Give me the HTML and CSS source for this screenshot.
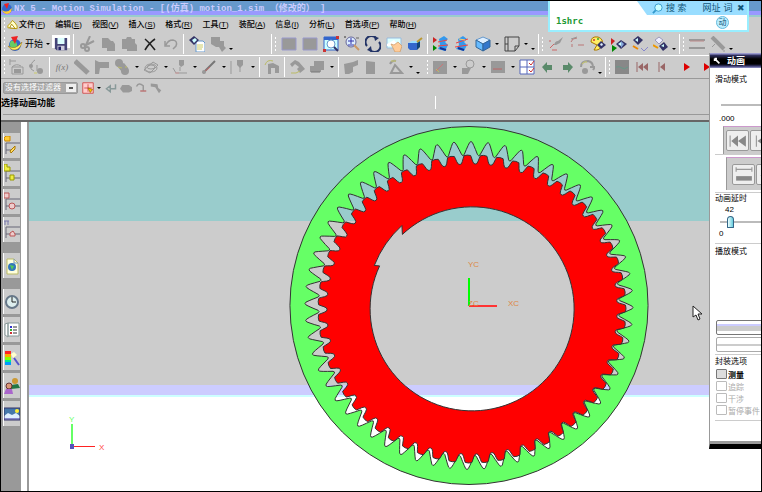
FILE: index.html
```
<!DOCTYPE html>
<html lang="zh-CN">
<head>
  <meta charset="UTF-8">
  <meta name="viewport" content="width=device-width, initial-scale=1.0">
  <title>NX 5 - Motion Simulation</title>
  <link rel="stylesheet" href="styles.css">
</head>
<body>
<div class="app">

  <header class="titlebar">
    <svg class="logo" viewBox="0 0 12 12"><circle cx="6" cy="6" r="5" fill="#36c"/><path d="M1 7q5 4 10-2l-1 4q-4 4-8 0z" fill="#fc3"/><path d="M3 1l5-1-2 6z" fill="#e22"/></svg>
    <h1>NX 5 - Motion Simulation - [(仿真) motion_1.sim （修改的） ]</h1>
  </header>

  <!-- Menu -->
  <nav class="menubar">
    <i class="grip"></i>
    <svg class="menu-icon" viewBox="0 0 12 12"><path d="M1 9q-1-3 2-4l3-4 3 3q3 3 2 6z" fill="#ffc" stroke="#b90"/><path d="M3 9l2-4 4 5z" fill="#fff" stroke="#a80"/></svg>
    <button>文件(<u>F</u>)</button>
    <button>编辑(<u>E</u>)</button>
    <button>视图(<u>V</u>)</button>
    <button>插入(<u>S</u>)</button>
    <button>格式(<u>R</u>)</button>
    <button>工具(<u>T</u>)</button>
    <button>装配(<u>A</u>)</button>
    <button>信息(<u>I</u>)</button>
    <button>分析(<u>L</u>)</button>
    <button>首选项(<u>P</u>)</button>
    <button>帮助(<u>H</u>)</button>
  </nav>

  <!-- Standard and view tools -->
  <div class="toolbar toolbar-main">
    <i class="grip"></i>
    <button class="start"><svg viewBox="0 0 16 16"><circle cx="8" cy="9" r="6" fill="#36c"/><path d="M4 5q5-1 6 3t-5 5q-4-4-1-8z" fill="#6c6"/><path d="M1 10q7 5 14-4-1 5-4 7-6 3-10-3z" fill="#fe6" stroke="#960" stroke-width=".5"/><path d="M4 1l7-1-3 8z" fill="#e22"/></svg>开始<i class="arrow"></i></button>
    <button class="tool active" aria-label="保存"><svg viewBox="0 0 16 16"><path d="M1 1h14v14H3l-2-2z" fill="#447"/><path d="M4 1h8v7H4z" fill="#dff"/><path d="M4 10h8v5H4z" fill="#ccd"/><path d="M5 11h3v4H5z" fill="#226"/></svg></button>
    <i class="sep"></i>
    <button class="tool" aria-label="剪切"><svg viewBox="0 0 16 16"><path d="M11 0L7 9M15 5L5 10" class="off-line thick"/><circle cx="4" cy="10" r="2" class="off-line thick"/><circle cx="8" cy="13" r="2" class="off-line thick"/></svg></button>
    <button class="tool" aria-label="复制"><svg viewBox="0 0 16 16" class="off"><path d="M2 2h6l3 3h2l2 3v7H7v-3H2z"/></svg></button>
    <button class="tool" aria-label="粘贴"><svg viewBox="0 0 16 16" class="off"><path d="M1 3h4l1-2h4l1 2h3v4l2 2v6H6v-2H1z"/></svg></button>
    <button class="tool" aria-label="删除"><svg viewBox="0 0 16 16"><path d="M3 3q5 4 10 11M13 3Q7 7 3 14" stroke="#222" stroke-width="1.6" fill="none"/></svg></button>
    <button class="tool" aria-label="撤消"><svg viewBox="0 0 16 16"><path d="M3 9q2-5 7-5 5 1 3 6l-3 3M2 5v5h5" stroke="#999" stroke-width="1.5" fill="none"/></svg></button>
    <i class="sep"></i>
    <button class="tool" aria-label="属性"><svg viewBox="0 0 16 16"><path d="M7 5h7l2 2v9H7z" fill="#fff" stroke="#69c"/><path d="M8 9h6M8 11h6M8 13h5" stroke="#cc6"/><path d="M0 4l5-4 5 4-5 5z" fill="#336"/><path d="M3 4l3-2 2 2-3 3z" fill="#cff"/></svg></button>
    <button class="tool" aria-label="分析工具"><svg viewBox="0 0 16 16" class="off"><path d="M1 1h9v4h4v5l2 2-4 4-3-5H6L1 8z"/></svg></button>
    <i class="more"></i>
    <i class="gap"></i>
    <i class="sep"></i>
    <i class="grip"></i>
    <button class="tool" aria-label="刷新"><svg viewBox="0 0 16 16" class="off"><path d="M1 2h14v12H1z" stroke="#99c"/></svg></button>
    <button class="tool" aria-label="缩放区域"><svg viewBox="0 0 16 16" class="off"><path d="M1 2h14v12H1z" stroke="#99c"/></svg></button>
    <button class="tool" aria-label="适合窗口"><svg viewBox="0 0 16 16"><path d="M1 1h14v13H1z" fill="#cff" stroke="#36c"/><path d="M1 1h14v3H1z" fill="#36c"/><circle cx="8" cy="8" r="4" fill="#fff" stroke="#69c"/><path d="M11 11l4 4" stroke="#336" stroke-width="2"/><path d="M0 13h3v3H0zM13 0h3v3h-3z" fill="#c33"/></svg></button>
    <button class="tool" aria-label="缩放"><svg viewBox="0 0 16 16"><circle cx="7" cy="6" r="5" fill="#def" stroke="#669"/><path d="M4 5h6M7 2v6M4 9h6" stroke="#33a"/><path d="M10 9l5 5" stroke="#c96" stroke-width="2"/><path d="M0 1h2M1 0v2M12 2h3" stroke="#666"/></svg></button>
    <button class="tool" aria-label="旋转"><svg viewBox="0 0 16 16"><path d="M2 10A6 6 0 0 1 11 2M14 6a6 6 0 0 1-9 8" stroke="#236" stroke-width="2" fill="none"/><path d="M9 0l5 2-4 3zM7 16l-5-2 4-4z" fill="#236"/></svg></button>
    <button class="tool" aria-label="平移"><svg viewBox="0 0 16 16"><path d="M1 2h14v10H1z" fill="#dff" stroke="#9bd"/><path d="M1 8l7-4 5 6H1z" fill="#fff"/><path d="M5 8l3 1 4-3 4 4-2 6H9z" fill="#fc9" stroke="#c96" stroke-width=".7"/></svg></button>
    <button class="tool" aria-label="着色"><svg viewBox="0 0 16 16"><path d="M1 7l4-2h9l-2 3z" fill="#9df"/><path d="M1 7h9v7H3l-2-2z" fill="#36c"/><path d="M10 7l3-2v6l-3 3z" fill="#147"/><path d="M10 6l5-4" stroke="#b93" stroke-width="2"/></svg></button>
    <i class="sep"></i>
    <button class="tool" aria-label="替换视图"><svg viewBox="0 0 16 16"><path d="M0 1l4 3-4 3z" fill="#c22"/><path d="M0 9l4 3-4 3z" fill="#080"/><path d="M6 3l5-3 4 3-3 3 3 3-3 6-7-2 2-4z" fill="#39e"/><path d="M5 6l9-2M5 10l10-1" stroke="#e44"/><path d="M7 12l6 2" stroke="#139" stroke-width="2"/></svg></button>
    <button class="tool" aria-label="对齐视图"><svg viewBox="0 0 16 16"><path d="M4 3l5-3 4 3-3 3 3 3-3 6-8-2 3-4z" fill="#39e"/><path d="M2 7l12-4M1 11l13-2" stroke="#e44"/><path d="M4 12l6 2" stroke="#139" stroke-width="2"/><path d="M5 3l6 1" stroke="#fc6"/></svg></button>
    <button class="tool" aria-label="正等测视图"><svg viewBox="0 0 16 16"><path d="M1 4l7-3 7 3-7 4z" fill="#def" stroke="#69c"/><path d="M1 4l7 4v7l-7-4z" fill="#6bf" stroke="#369"/><path d="M15 4L8 8v7l7-4z" fill="#37c" stroke="#369"/></svg></button>
    <i class="arrow"></i>
    <button class="tool" aria-label="背景"><svg viewBox="0 0 16 16"><path d="M1 1h14v9l-4 5H1z" fill="#ccc" stroke="#444"/><path d="M4 1v14M1 8h3M15 10h-4v5" fill="none" stroke="#444"/></svg></button>
    <i class="arrow"></i>
    <i class="more"></i>
    <i class="sep"></i>
    <i class="grip"></i>
    <button class="tool" aria-label="连杆"><svg viewBox="0 0 16 16"><path d="M1 5h2M2 12l4-4M4 14h5" stroke="#c66"/><path d="M6 9q1-4 4-4l5-4-3 6-4 2z" fill="#999"/></svg></button>
    <button class="tool" aria-label="运动副"><svg viewBox="0 0 16 16"><path d="M2 6q1-4 6-4M9 9h6M3 8v3" stroke="#b77" fill="none"/><path d="M2 3l6-2" stroke="#999"/></svg></button>
    <button class="tool" aria-label="外观"><svg viewBox="0 0 16 16"><path d="M1 6q0-6 7-5 6 2 4 8-2 6-8 5l3-5z" fill="#fe6" stroke="#a70"/><circle cx="4" cy="4" r="1" fill="#c33"/><circle cx="8" cy="3" r="1" fill="#3a3"/><path d="M7 9l4-4 5 4-5 4z" fill="#336"/><path d="M10 8l2-1 1 2-2 1z" fill="#def"/></svg></button>
    <button class="tool" aria-label="显示"><svg viewBox="0 0 16 16"><path d="M0 2l4 3-4 4z" fill="#c22"/><path d="M1 9l5 3-5 4z" fill="#080"/><path d="M5 8l5-4 6 4-6 5z" fill="#336"/><path d="M7 8l3-2v4z" fill="#cff"/><path d="M10 5l3 3-3 4z" fill="#8ad"/></svg></button>
    <button class="tool" aria-label="隐藏"><svg viewBox="0 0 16 16"><path d="M1 4l5-4 5 4-5 5z" fill="#336"/><path d="M3 4l3-2v4z" fill="#cff"/><path d="M1 10l5 3" stroke="#e80" stroke-width="2"/><path d="M9 12l3 3 4-4" fill="none" stroke="#88c"/></svg></button>
    <button class="tool" aria-label="全部显示"><svg viewBox="0 0 16 16"><path d="M2 4l4-3 4 3-4 4z" fill="#eef" stroke="#99b"/><path d="M6 10l5-4 4 5-5 4z" fill="#336"/><path d="M8 10l3-2v3z" fill="#cff"/><path d="M0 9l5 3" stroke="#e90" stroke-width="2"/></svg></button>
    <i class="more"></i>
    <i class="sep"></i>
    <i class="grip"></i>
    <button class="tool" aria-label="尺寸"><svg viewBox="0 0 16 16"><path d="M0 4h16M0 12h16" stroke="#999" stroke-width="2"/><path d="M1 5h14" stroke="#b88"/></svg></button>
    <button class="tool" aria-label="注释"><svg viewBox="0 0 16 16"><path d="M2 1l12 12" stroke="#999" stroke-width="4"/><path d="M2 11l3-3M13 15h2" stroke="#999"/></svg></button>
    <i class="more"></i>
  </div>

  <!-- Motion tools -->
  <div class="toolbar toolbar-motion">
    <i class="grip"></i>
    <button class="tool" aria-label="环境"><svg viewBox="0 0 16 16"><path d="M1 0v6M1 2h6M3 8q4-4 9-1M3 8h11v7H3z" class="off-line"/><path d="M5 10h7v4H5z" fill="#999"/></svg></button>
    <button class="tool" aria-label="仿真"><svg viewBox="0 0 16 16"><path d="M6 1Q1 4 2 10l3 2M8 6v6" class="off-line"/><circle cx="11" cy="12" r="3" fill="#999"/><circle cx="2" cy="7" r="2" fill="#999"/><path d="M5 14h3" stroke="#cc6"/></svg></button>
    <i class="sep"></i>
    <button class="tool fx">f(x)</button>
    <button class="tool" aria-label="连杆"><svg viewBox="0 0 16 16"><path d="M1 2l13 12" stroke="#999" stroke-width="5"/></svg></button>
    <button class="tool" aria-label="运动副"><svg viewBox="0 0 16 16" class="off"><path d="M1 1l4 2h10v6H6l-1 6H1z"/></svg></button>
    <button class="tool" aria-label="齿轮"><svg viewBox="0 0 16 16" class="off"><circle cx="5" cy="4" r="4"/><circle cx="11" cy="12" r="4"/><path d="M3 7l7-3 4 5-6 4z"/><path d="M4 8l4 1M12 7v2" stroke="#bb6"/></svg></button>
    <i class="arrow"></i>
    <button class="tool" aria-label="弹簧"><svg viewBox="0 0 16 16"><path d="M1 11l9-8 5 3-8 8z" class="off-line"/><ellipse cx="8" cy="8" rx="4" ry="2" class="off-line"/><ellipse cx="8" cy="9" rx="6" ry="4" class="off-line"/></svg></button>
    <i class="arrow"></i>
    <button class="tool" aria-label="接触"><svg viewBox="0 0 16 16"><path d="M8 8v4M1 9l3 5h11" class="off-line"/><path d="M7 1h5v5l-3 2-2-2z" fill="#999"/><path d="M3 14h4" stroke="#c99"/></svg></button>
    <i class="arrow"></i>
    <button class="tool" aria-label="标量力"><svg viewBox="0 0 16 16"><path d="M2 14L14 2" stroke="#777" stroke-width="2"/><path d="M2 14l7-6" stroke="#c66"/><circle cx="3" cy="13" r="2" fill="#999"/></svg></button>
    <i class="arrow"></i>
    <button class="tool" aria-label="标记"><svg viewBox="0 0 16 16"><path d="M1 2v13M10 8v5" class="off-line"/><path d="M7 1h6v5l-3 3-3-3z" fill="#999"/></svg></button>
    <i class="arrow"></i>
    <i class="sep"></i>
    <button class="tool" aria-label="驱动"><svg viewBox="0 0 16 16"><path d="M1 6q2-6 8-4" stroke="#bb6" fill="none"/><path d="M4 5l5-1 6 3v7h-4v-5H7v6H4z" fill="#999"/></svg></button>
    <i class="sep"></i>
    <button class="tool" aria-label="函数"><svg viewBox="0 0 16 16" class="off"><path d="M1 5l5-4 4 2 6 7-5 4-3-4 2-2-4-3-3 3z"/><path d="M2 14h5l4-2" stroke="#bb6" fill="none"/></svg></button>
    <button class="tool" aria-label="干涉"><svg viewBox="0 0 16 16" class="off"><path d="M5 2h10v9h-3v2H1V7h4z"/><path d="M2 13h9" stroke="#777"/></svg></button>
    <i class="arrow"></i>
    <i class="sep"></i>
    <button class="tool" aria-label="测量"><svg viewBox="0 0 16 16" class="off"><path d="M1 5l9-2 5-2v5l-5 2v5l-4 2H2z"/></svg></button>
    <button class="tool" aria-label="追踪"><svg viewBox="0 0 16 16" class="off"><path d="M3 2l9 1v12H3z"/></svg></button>
    <i class="gap-small"></i>
    <button class="tool" aria-label="载荷"><svg viewBox="0 0 16 16"><path d="M2 5q2-4 6-3M3 14l4-8 7 8z" stroke="#999" stroke-width="2" fill="none"/><path d="M3 2h5" stroke="#cc6"/></svg></button>
    <i class="arrow"></i>
    <i class="more"></i>
    <i class="gap-small"></i>
    <i class="grip"></i>
    <button class="tool" aria-label="求解"><svg viewBox="0 0 16 16" class="off"><path d="M1 2h14v13H1z"/><path d="M4 12l7-7" stroke="#c77"/><path d="M4 10l3 3" stroke="#bb6"/></svg></button>
    <i class="arrow"></i>
    <button class="tool" aria-label="图表"><svg viewBox="0 0 16 16"><circle cx="9" cy="5" r="4" class="off-line"/><path d="M1 9h9l-3 6H1z" fill="#999"/></svg></button>
    <i class="arrow"></i>
    <button class="tool" aria-label="电子表格"><svg viewBox="0 0 16 16" class="off"><path d="M1 2h14v12H1z"/><path d="M3 10h9" stroke="#b66"/></svg></button>
    <i class="arrow"></i>
    <button class="tool" aria-label="检查"><svg viewBox="0 0 16 16"><path d="M1 1h14v14H1zM8 1v14M1 8h14" fill="#fff" stroke="#56b"/><path d="M10 4l2 2 3-4M10 11l2 2 3-4" stroke="#c33" fill="none"/></svg></button>
    <button class="tool" aria-label="后退"><svg viewBox="0 0 16 16"><path d="M3 8l5-5v3h5v5H8v3z" fill="#5a8a6a"/></svg></button>
    <button class="tool" aria-label="前进"><svg viewBox="0 0 16 16"><path d="M14 8L9 3v3H4v5h5v3z" fill="#5a8a6a"/></svg></button>
    <button class="tool" aria-label="重做"><svg viewBox="0 0 16 16"><path d="M2 8q0-6 7-6 5 1 5 6M11 8h5l-2 3" stroke="#999" stroke-width="2" fill="none"/><circle cx="6" cy="12" r="3" fill="#999"/><path d="M3 5q2-3 5-2" stroke="#cc6" fill="none"/></svg></button>
    <i class="more"></i>
    <i class="sep"></i>
    <i class="grip"></i>
    <button class="tool" aria-label="动画"><svg viewBox="0 0 16 16"><path d="M1 1h14v14H1z" fill="#888"/><path d="M2 8q4-1 6 1t6-1" stroke="#698" fill="none"/></svg></button>
    <button class="tool" aria-label="首帧"><svg viewBox="0 0 16 16"><path d="M3 3v10" stroke="#966"/><path d="M9 4v8L4 8zM14 4v8L9 8z" fill="#966"/></svg></button>
    <button class="tool" aria-label="上一帧"><svg viewBox="0 0 16 16"><path d="M5 3v10" stroke="#966"/><path d="M11 4v8L6 8z" fill="#966"/></svg></button>
    <i class="gap-small"></i>
    <button class="tool" aria-label="播放"><svg viewBox="0 0 16 16"><path d="M5 4v8l6-4z" fill="#d00"/></svg></button>
    <button class="tool" aria-label="下一帧"><svg viewBox="0 0 16 16"><path d="M5 4v8l6-4z" fill="#d00"/></svg></button>
  </div>

  <!-- Selection bar -->
  <div class="selection-bar">
    <select aria-label="选择过滤器" disabled><option>没有选择过滤器</option></select>
    <button class="tool" aria-label="捕捉"><svg viewBox="0 0 16 16"><path d="M1 1h14v14H1z" fill="#fcc" stroke="#c33"/><path d="M8 3v10M3 8h10" stroke="#c33"/><path d="M8 8l6 2-3 4z" fill="#fc0" stroke="#960"/></svg></button>
    <i class="arrow"></i>
    <button class="tool" aria-label="返回"><svg viewBox="0 0 16 16"><path d="M14 3v6H8M7 5L2 9l5 4z" fill="none" stroke="#899" stroke-width="2"/></svg></button>
    <button class="tool" aria-label="高亮"><svg viewBox="0 0 16 16" class="off"><path d="M0 9l3-5h9l4 3v5l-4 2H4z"/></svg></button>
    <button class="tool" aria-label="全选"><svg viewBox="0 0 16 16"><path d="M2 6q3-6 9-1v7" stroke="#999" stroke-width="2" fill="none"/><path d="M7 12h8" stroke="#b77" stroke-width="2"/></svg></button>
    <button class="tool" aria-label="反选"><svg viewBox="0 0 16 16" class="off"><path d="M1 2l9 1 1 5 4 3-3 4-5-8-6-1z"/></svg></button>
  </div>

  <div class="prompt">
    <p>选择动画功能</p>
    <i class="prompt-split"></i>
  </div>

  <main>
    <!-- Resource bar -->
    <aside class="resources">
      <button aria-label="装配导航器"><svg viewBox="0 0 16 20"><path d="M2 7v11M2 7h14M2 14h5" class="tree"/><path d="M0 2l2-2h4v5H1z" fill="#fc3" stroke="#c80"/><path d="M6 15l5-5v3l-4 4z" fill="#fd6" stroke="#a70"/></svg></button>
      <button aria-label="部件导航器"><svg viewBox="0 0 16 20"><path d="M2 7v11M2 7h14M2 14h14" class="tree"/><path d="M0 0h3v3h3v4H0z" fill="#ee4" stroke="#990"/><path d="M6 11h4v5H6z" fill="#ee4" stroke="#990"/></svg></button>
      <button aria-label="约束导航器"><svg viewBox="0 0 16 20"><path d="M2 7v11M2 7h14M2 14h14" class="tree"/><path d="M0 1h5v5H0z" fill="#ecc" stroke="#b55"/><circle cx="8" cy="14" r="3" fill="#ecc" stroke="#b55"/></svg></button>
      <button aria-label="运动导航器"><svg viewBox="0 0 16 20"><path d="M2 7v11M2 7h14M2 14h14" class="tree"/><path d="M0 1h5M1 1v4M4 1v4" stroke="#77a"/><path d="M6 16v-3l3-2 2 3v2z" fill="#ecc" stroke="#b55"/></svg></button>
      <button class="spaced" aria-label="浏览器"><svg viewBox="0 0 16 20"><path d="M3 3h7l4 4v11H3z" fill="#ffd" stroke="#bb6"/><path d="M10 3v4h4" fill="none" stroke="#79b"/><circle cx="8" cy="11" r="4" fill="#37b"/><path d="M6 9l4 1-2 4z" fill="#5c5"/></svg></button>
      <button class="spaced" aria-label="历史"><svg viewBox="0 0 16 20"><circle cx="8" cy="10" r="6" fill="#dee" stroke="#678" stroke-width="2"/><path d="M8 5v5h4" fill="none" stroke="#222"/></svg></button>
      <button aria-label="系统材料"><svg viewBox="0 0 16 20"><path d="M1 4l3-1v14l-3-2zM4 3h11v13H4z" fill="#fff" stroke="#899"/><path d="M6 6h2v2H6z" fill="#33c"/><path d="M6 9h2v2H6z" fill="#3a3"/><path d="M6 12h2v2H6z" fill="#c33"/><path d="M9 7h4M9 10h4M9 13h4" stroke="#333"/></svg></button>
      <button aria-label="可视化"><svg viewBox="0 0 16 20"><path d="M1 3h6v3H1z" fill="#f22"/><path d="M1 6h6v3H1z" fill="#fa0"/><path d="M1 9h6v3H1z" fill="#8f0"/><path d="M1 12h6v2H1z" fill="#0e8"/><path d="M1 14h6v3H1z" fill="#09f"/><path d="M7 6l3-2 3 3-4 3z" fill="#ffc"/><path d="M10 10l5 7" stroke="#55c" stroke-width="2"/></svg></button>
      <button aria-label="角色"><svg viewBox="0 0 16 20"><circle cx="11" cy="5" r="3" fill="#c93"/><path d="M7 13V9l7-1 2 4z" fill="#274"/><circle cx="5" cy="10" r="3" fill="#d97" stroke="#633"/><path d="M0 18l2-5h6l1 5z" fill="#a6c"/></svg></button>
      <button aria-label="场景"><svg viewBox="0 0 16 20"><path d="M0 4h16v12H0z" fill="#47a"/><path d="M0 12l4-3 4 2 4-2 4 3v2H0z" fill="#def"/><path d="M0 14h16v2H0z" fill="#88c"/><path d="M0 4h16v12H0z" fill="none" stroke="#336"/><circle cx="13" cy="7" r="2" fill="#fe3"/></svg></button>
    </aside>

    <!-- Graphics window -->
    <section class="viewport">
      <svg class="model">
        <path id="ring" class="ring" fill-rule="evenodd"/>
        <path id="pinion" class="pinion" fill-rule="evenodd"/>
        <g class="wcs">
          <path d="M440 184h28" stroke="#f33" stroke-width="2"/>
          <path d="M440 156v28" stroke="#0f0" stroke-width="2"/>
          <text x="439" y="145">YC</text>
          <text x="479" y="184">XC</text>
          <text x="439" y="184">ZC</text>
        </g>
        <g class="triad">
          <path d="M43 302v22" stroke="#6f6" stroke-width="2"/>
          <path d="M43 324.500h23" stroke="#f22"/>
          <path d="M41 322h4v5h-4z" fill="#55b"/>
          <text x="40" y="300" fill="#6f6">Y</text>
          <text x="70" y="328" fill="#f44">X</text>
        </g>
        <path class="pointer" d="M664 184v11l3-2 2 5 2-1-2-5h4z"/>
      </svg>
    </section>
  </main>

  <!-- Animation dialog -->
  <aside class="dialog">
    <h2><svg viewBox="0 0 10 10"><path d="M2 2l6 6M2 2v3M2 2h3" stroke="#fff" stroke-width="2"/></svg>动画</h2>
    <div class="dialog-body">
      <section class="group">
        <h3>滑动模式</h3>
        <i class="track"></i>
        <output>.000</output>
        <div class="button-row">
          <button aria-label="首帧"><svg viewBox="0 0 16 16"><path d="M1 3v10" class="off-line"/><path d="M8 3v10L2 8zM15 3v10L8 8z" fill="#888"/></svg></button>
          <button aria-label="上一帧"><svg viewBox="0 0 16 16"><path d="M3 3v10" class="off-line"/><path d="M11 3v10L4 8z" fill="#888"/></svg></button>
        </div>
      </section>
      <section class="group group-limits">
        <div class="button-row wide">
          <button aria-label="装配位置"><svg viewBox="0 0 16 16"><path d="M1 3h14M1 1v4M15 1v4" stroke="#999"/><path d="M1 9h14v4H1z" fill="#888"/></svg></button>
          <button aria-label="设计位置"><svg viewBox="0 0 16 16"><path d="M1 8h14l-6 4z" fill="#999"/></svg></button>
        </div>
      </section>
      <section class="group group-delay">
        <h3><label for="delay">动画延时</label></h3>
        <output for="delay">42</output>
        <input type="range" id="delay" min="0" max="1000" value="42">
        <span class="range-min">0</span>
      </section>
      <section class="group group-play">
        <h3>播放模式</h3>
        <button class="bar-button" aria-label="播放一次"></button>
        <button class="bar-button light" aria-label="循环播放"></button>
      </section>
      <section class="group group-package">
        <h3>封装选项</h3>
        <label class="check"><input type="checkbox">测量</label>
        <label class="check"><input type="checkbox" disabled>追踪</label>
        <label class="check"><input type="checkbox" disabled>干涉</label>
        <label class="check"><input type="checkbox" disabled>暂停事件</label>
      </section>
    </div>
  </aside>

  <!-- Floating input bar -->
  <div class="search">
    <div class="search-head">
      <svg viewBox="0 0 12 12"><path d="M1 11l4-4" stroke="#39c" stroke-width="2"/><circle cx="7" cy="5" r="4" fill="#cff" stroke="#39c"/></svg>
      <button>搜 索</button>
      <button>网址</button>
      <button>词</button>
      <button class="close">✖</button>
    </div>
    <div class="search-body">
      <input type="text" value="1shrc" aria-label="搜索">
      <button class="round">动</button>
    </div>
  </div>

</div>
<script src="gears.js"></script>
</body>
</html>
```

FILE: styles.css
```
* {
  margin: 0;
  padding: 0;
  box-sizing: border-box;
}

body {
  background: #000;
  font-family: "Liberation Sans", "Noto Sans CJK SC", sans-serif;
  font-size: 8px;
  color: #000;
}

button,
input,
select {
  font: inherit;
  color: inherit;
  background: none;
  border: none;
}

h1, h2, h3 {
  font-size: inherit;
  font-weight: normal;
}

i {
  display: block;
  flex: none;
}

svg {
  display: block;
  flex: none;
}

.app {
  position: relative;
  display: flex;
  flex-direction: column;
  height: 100vh;
  border: 1px solid #000;
  background: #ccc;
  overflow: hidden;
}

/* Title */
.titlebar {
  display: flex;
  align-items: center;
  gap: 1px;
  height: 16px;
  flex: none;
  background: linear-gradient(#69c 10px, #99f 10px, #99f 14px, #9cc 14px);
}

.logo {
  width: 12px;
  height: 12px;
}

.titlebar h1 {
  font-family: "Liberation Mono", "Noto Sans CJK SC", monospace;
  font-size: 9px;
  font-weight: bold;
  line-height: 14px;
  color: #ccf;
  white-space: pre;
}

/* Menu */
.menubar {
  display: flex;
  align-items: center;
  height: 15px;
  flex: none;
  padding-left: 2px;
}

.menu-icon {
  width: 11px;
  height: 12px;
  margin-right: -4px;
}

.menubar button {
  padding: 0 5px;
  font-weight: 500;
  line-height: 14px;
  white-space: nowrap;
}

/* Toolbars */
.toolbar {
  display: flex;
  align-items: center;
  height: 24px;
  flex: none;
  padding-left: 2px;
  overflow: hidden;
}

.toolbar-main {
  border-bottom: 1px solid #fff;
}

.toolbar-motion {
  height: 23px;
  border-bottom: 1px solid #999;
}

.tool {
  display: flex;
  align-items: center;
  justify-content: center;
  width: 21px;
  height: 20px;
  flex: none;
}

.tool.active {
  background: linear-gradient(#fff, #fff) no-repeat 2px 1px / 18px 13px;
}

.toolbar-motion .tool {
  width: 20px;
}

.tool svg,
.start svg {
  width: 16px;
  height: 16px;
}

.tool.active svg {
  width: 14px;
  height: 14px;
}

.off {
  fill: #999;
}

.off-line {
  fill: none;
  stroke: #999;
}

.thick {
  stroke-width: 2;
}

.fx {
  font: italic 9px "Liberation Serif", serif;
  color: #777;
}

.start {
  display: flex;
  align-items: center;
  gap: 2px;
  width: 43px;
  flex: none;
  font-size: 9px;
  white-space: nowrap;
}

.start .arrow {
  width: 5px;
}

.grip {
  width: 4px;
  height: 14px;
  background: repeating-linear-gradient(#fff 0 2px, #ccc 2px 4px) no-repeat 1px 0 / 1px 100%;
}

.sep {
  width: 5px;
  height: 20px;
  background: linear-gradient(#fff, #fff) no-repeat 2px 0 / 1px 100%;
}

.gap {
  width: 35px;
}

.gap-small {
  width: 5px;
}

.arrow {
  display: flex;
  justify-content: center;
  width: 8px;
}

.toolbar-motion .arrow {
  width: 9px;
}

.arrow::before,
.more::before {
  content: "";
  display: block;
  width: 0;
  border: 2px solid transparent;
  border-top-color: #000;
  border-bottom: 0;
}

.more {
  width: 6px;
  padding: 11px 0 0 1px;
}

/* Selection bar */
.selection-bar {
  display: flex;
  align-items: center;
  height: 17px;
  flex: none;
  padding-left: 2px;
}

.selection-bar select {
  width: 75px;
  height: 12px;
  margin-right: 2px;
  border: 1px solid #999;
  border-radius: 2px;
  -webkit-appearance: none;
  appearance: none;
  padding-left: 1px;
  font-size: 8px;
  line-height: 10px;
  color: #fff;
  opacity: 1;
  background:
    linear-gradient(#555, #555) no-repeat right 4px top 4px / 4px 2px,
    linear-gradient(#eee, #eee) no-repeat right 1px top 1px / 10px 8px,
    #aaa;
}

.selection-bar .tool {
  width: 15px;
}

.selection-bar .tool svg {
  width: 12px;
  height: 12px;
}

.prompt {
  display: flex;
  align-items: flex-start;
  height: 26px;
  flex: none;
  border-bottom: 2px solid #666;
  background: linear-gradient(#999, #999) no-repeat 2px 18px / 100% 1px;
}

.prompt p {
  width: 434px;
  font-size: 9px;
  font-weight: bold;
  line-height: 15px;
}

.prompt-split {
  width: 1px;
  height: 13px;
  background: #fff;
}

main {
  display: flex;
  flex: 1;
  min-height: 0;
}

/* Resource bar */
.resources {
  width: 28px;
  flex: none;
  padding: 11px 0 0 2px;
  background: linear-gradient(90deg, #999 20px, #fff 20px, #fff 26px, #999 26px);
}

.resources button {
  display: block;
  width: 18px;
  height: 25px;
  margin-bottom: 3px;
  border-left: 1px solid #fff;
  border-right: 1px solid #999;
  background: #ccc;
}

.resources .spaced {
  margin-top: 11px;
}

.resources svg {
  width: 16px;
  height: 20px;
}

.tree {
  fill: none;
  stroke: #667;
}

/* Graphics window */
.viewport {
  flex: 1;
  min-width: 0;
  background: linear-gradient(#9cc 99px, #ccc 99px, #ccc 263px, #ccf 263px, #ccf 273px, #cff 273px, #cff 275px, #fff 275px);
}

.model {
  width: 100%;
  height: 100%;
}

.ring {
  fill: #6f6;
  stroke: #333;
}

.pinion {
  fill: #f00;
  stroke: #333;
}

.model text {
  font-family: "Liberation Sans", sans-serif;
  font-size: 8px;
}

.wcs text {
  fill: #d84;
}

.pointer {
  fill: #fff;
  stroke: #222;
}

/* Animation dialog */
.dialog {
  position: absolute;
  top: 52px;
  right: 0;
  width: 52px;
  height: 396px;
  border-left: 1px solid #999;
  border-bottom: 5px solid #000;
  background: #fff;
  overflow: hidden;
  white-space: nowrap;
}

.dialog h2 {
  display: flex;
  align-items: center;
  gap: 6px;
  height: 15px;
  padding-left: 3px;
  font-size: 9px;
  font-weight: bold;
  color: #fff;
  background: linear-gradient(#99c 1px, #336 2px, #000 6px, #000 11px, #336 13px, #99c);
}

.dialog h2 svg {
  width: 8px;
  height: 8px;
}

.dialog-body {
  display: flex;
  flex-direction: column;
  height: 376px;
  padding-left: 5px;
  border-bottom: 3px solid #999;
}

.group {
  flex: none;
  height: 87px;
  padding-top: 6px;
  border-bottom: 1px solid #ccc;
}

.group h3 {
  line-height: 12px;
}

.group output,
.range-min {
  display: block;
  line-height: 10px;
}

.track {
  height: 2px;
  margin: 18px 0 8px 6px;
  background: #bbb;
}

.group output {
  padding-left: 4px;
}

.button-row {
  display: flex;
  gap: 1px;
  height: 28px;
  margin: 2px 0 0 8px;
  padding: 3px 0 3px 2px;
  background: #ccc;
  border-left: 1px solid #999;
  border-top: 1px solid #c9c;
}

.button-row button {
  width: 23px;
  flex: none;
  border: 1px solid #999;
  border-radius: 2px;
  background: #eee;
}

.button-row svg {
  width: 18px;
  height: 18px;
  margin: auto;
}

.group-limits {
  height: 38px;
  padding-top: 0;
}

.button-row.wide {
  height: 33px;
  margin-left: 11px;
  padding: 6px 0 5px 5px;
}

.group-delay {
  height: 51px;
  padding-top: 0;
}

.group-delay output {
  padding-left: 10px;
}

#delay {
  display: block;
  width: 180px;
  height: 14px;
  margin-left: 5px;
  -webkit-appearance: none;
  appearance: none;
  background: linear-gradient(#bbb, #bbb) no-repeat 0 6px / 100% 2px;
}

#delay::-webkit-slider-thumb {
  -webkit-appearance: none;
  width: 7px;
  height: 12px;
  border: 1px solid #368;
  border-radius: 4px 4px 1px 1px;
  background: linear-gradient(90deg, #eff, #6cd);
}

.range-min {
  padding-left: 4px;
}

.group-play {
  height: 111px;
  padding-top: 2px;
}

.group-play h3 {
  margin-bottom: 62px;
}

.bar-button {
  display: block;
  width: 80px;
  height: 15px;
  margin-left: 1px;
  margin-bottom: 2px;
  border: 1px solid #777;
  border-radius: 2px;
  background: linear-gradient(#fff 3px, #ccf 3px, #ccf 5px, #ccc 5px, #ccc 10px, #fff 10px);
}

.bar-button.light {
  border-color: #aaa;
  background: linear-gradient(#fff 6px, #ccc 6px, #ccc 8px, #fff 8px);
}

.group-package {
  height: 66px;
  padding-top: 1px;
}

.check {
  display: flex;
  align-items: center;
  gap: 1px;
  height: 12px;
  padding-left: 1px;
  font-weight: bold;
}

.check input {
  width: 11px;
  height: 10px;
  flex: none;
  -webkit-appearance: none;
  appearance: none;
  border: 1px solid #777;
  border-radius: 1px;
  background: #ddd;
}

.check input:disabled {
  border-color: #bbb;
  background: #fff;
}

.check:has(input:disabled) {
  color: #aaa;
  font-weight: normal;
}

/* Floating input bar */
.search {
  position: absolute;
  top: 0;
  right: 12px;
  width: 201px;
  height: 31px;
  border: 2px solid #9ef;
  border-top: 0;
  background: #fff;
}

.search-head {
  display: flex;
  align-items: center;
  gap: 3px;
  height: 14px;
  margin-left: 87px;
  padding-left: 15px;
  background: #9df;
  clip-path: polygon(0 0, 100% 0, 100% 100%, 10px 100%);
  color: #157;
  font-size: 9px;
  line-height: 13px;
  white-space: nowrap;
}

.search-head svg {
  width: 11px;
  height: 11px;
}

.search-head button:nth-of-type(2) {
  margin-left: 13px;
}

.search-head .close {
  margin-left: 1px;
}

.search-body {
  display: flex;
  align-items: center;
  height: 15px;
}

.search-body input {
  flex: 1;
  min-width: 0;
  padding: 0 0 2px 6px;
  font-family: "DejaVu Sans Mono", monospace;
  font-size: 9px;
  font-weight: bold;
  line-height: 11px;
  color: #293;
}

.round {
  width: 13px;
  height: 13px;
  margin-right: 18px;
  border: 1px solid #6bd;
  border-radius: 50%;
  background: #bef;
  color: #157;
  line-height: 10px;
}
```

FILE: gears.js
```
// Point at radius r and angle deg, measured clockwise from the top
function polar(c, r, deg) {
  var a = deg * Math.PI / 180;
  return (c.x + r * Math.sin(a)).toFixed(1) + ' ' + (c.y - r * Math.cos(a)).toFixed(1);
}

function circlePath(c, r) {
  return 'M' + polar(c, r, 0) +
    'A' + r + ' ' + r + ' 0 1 1 ' + polar(c, r, 180) +
    'A' + r + ' ' + r + ' 0 1 1 ' + polar(c, r, 0) + 'Z';
}

// profile: [fraction of pitch, radius] pairs, repeated for every tooth
function toothPath(c, teeth, phase, profile) {
  var pitch = 360 / teeth;
  var points = [];
  for (var i = 0; i < teeth; i++) {
    profile.forEach(function (p) {
      points.push(polar(c, p[1], phase + (i + p[0]) * pitch));
    });
  }
  return 'M' + points.join('L') + 'Z';
}

var ringCenter = { x: 440, y: 183.5 };
var pinionCenter = { x: 443, y: 187 };

document.getElementById('ring').setAttribute('d',
  circlePath(ringCenter, 179) +
  toothPath(ringCenter, 60, 0.7, [
    [-0.08, 163], [0, 164], [0.08, 163], [0.17, 160], [0.28, 156],
    [0.42, 151], [0.5, 150], [0.58, 151], [0.72, 156], [0.83, 160]
  ])
);

// Bore with the wider notch on its upper left
var bore = 'M' + polar(pinionCenter, 102, -43) +
  'A102 102 0 1 1 ' + polar(pinionCenter, 102, -65) +
  'L' + polar(pinionCenter, 107, -66) +
  'A107 107 0 0 1 ' + polar(pinionCenter, 109, -40) + 'Z';

document.getElementById('pinion').setAttribute('d',
  toothPath(pinionCenter, 59, 1.3, [
    [-0.1, 145.5], [0, 145], [0.1, 145.5], [0.18, 148], [0.24, 151],
    [0.3, 153.5], [0.5, 154], [0.7, 153.5], [0.76, 151], [0.82, 148]
  ]) + bore
);
```
